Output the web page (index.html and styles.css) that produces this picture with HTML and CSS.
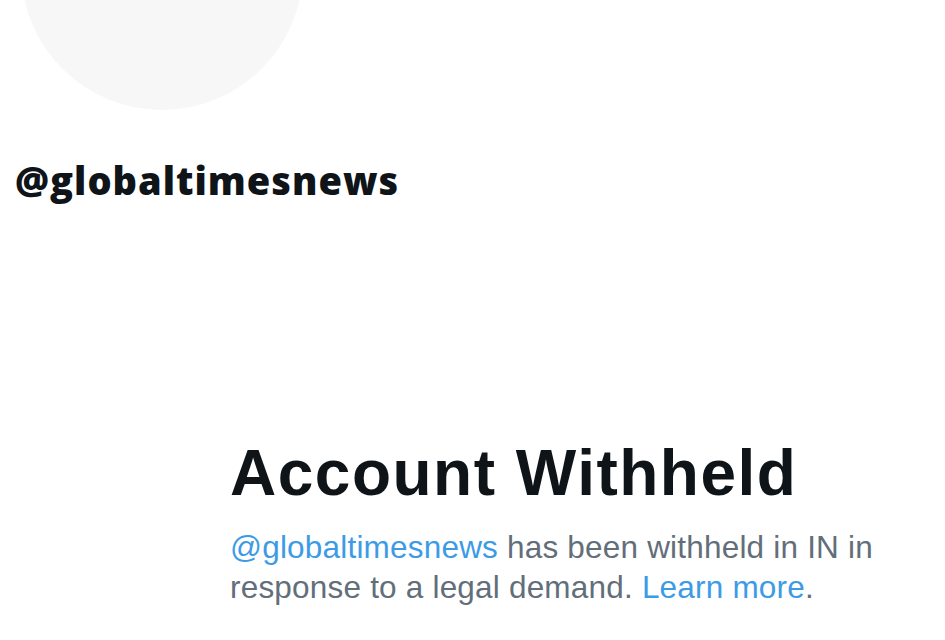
FILE: index.html
```html
<!DOCTYPE html>
<html>
<head>
	<meta charset="utf-8">
	<title>@globaltimesnews</title>
	<link rel="stylesheet" href="styles.css">
</head>
<body>
	<div class="profile">
		<div class="avatar"></div>
		<div class="handle">@globaltimesnews</div>
	</div>

	<div class="withheld">
		<h1 class="title">Account Withheld</h1>
		<p class="desc"><a href="#" class="link">@globaltimesnews</a> has been withheld in IN in response to a legal demand. <a href="#" class="link">Learn more</a>.</p>
	</div>
</body>
</html>
```

FILE: styles.css
```css
html, body{
	margin:0;
	padding:0;
	background-color:#ffffff;
}
body{
	font-family:"Liberation Sans", Arial, sans-serif;
	color:#0f1419;
	width:945px;
	height:640px;
	overflow:hidden;
}
.profile{
	padding-left:15px;
}
.avatar{
	width:282px;
	height:282px;
	border-radius:50%;
	background-color:#f7f7f7;
	margin-top:-172px;
	margin-left:6px;
}
.handle{
	margin-top:46px;
	font-family:"Open Sans", "Liberation Sans", sans-serif;
	font-size:38px;
	line-height:48px;
	font-weight:800;
	letter-spacing:1px;
}
.withheld{
	padding-left:230px;
	padding-top:233px;
	width:680px;
}
.title{
	margin:0;
	font-size:64px;
	line-height:72px;
	font-weight:bold;
	letter-spacing:1.5px;
}
.desc{
	margin:18px 0 0 0;
	font-size:31.5px;
	line-height:40px;
	letter-spacing:0.2px;
	color:#626e79;
}
.link{
	color:#3d9be6;
	text-decoration:none;
}
```
